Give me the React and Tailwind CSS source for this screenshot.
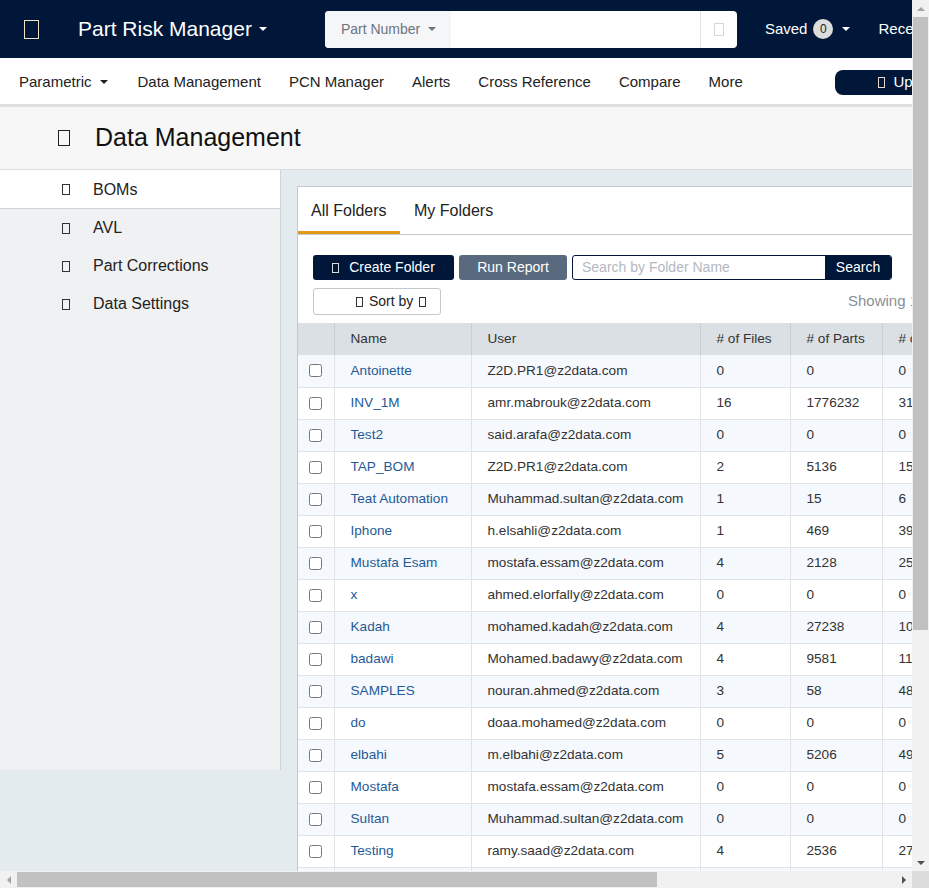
import { useState } from "react";

const Tofu = ({ className = "" }) => (
  <span className={`inline-block border ${className}`} />
);

const Caret = ({ className = "" }) => (
  <span
    className={`inline-block w-0 h-0 border-x-[4px] border-x-transparent border-t-[4px] ${className}`}
  />
);

const folders = [
  ["Antoinette", "Z2D.PR1@z2data.com", "0", "0", "0"],
  ["INV_1M", "amr.mabrouk@z2data.com", "16", "1776232", "31204"],
  ["Test2", "said.arafa@z2data.com", "0", "0", "0"],
  ["TAP_BOM", "Z2D.PR1@z2data.com", "2", "5136", "152"],
  ["Teat Automation", "Muhammad.sultan@z2data.com", "1", "15", "6"],
  ["Iphone", "h.elsahli@z2data.com", "1", "469", "392"],
  ["Mustafa Esam", "mostafa.essam@z2data.com", "4", "2128", "254"],
  ["x", "ahmed.elorfally@z2data.com", "0", "0", "0"],
  ["Kadah", "mohamed.kadah@z2data.com", "4", "27238", "1024"],
  ["badawi", "Mohamed.badawy@z2data.com", "4", "9581", "1180"],
  ["SAMPLES", "nouran.ahmed@z2data.com", "3", "58", "48"],
  ["do", "doaa.mohamed@z2data.com", "0", "0", "0"],
  ["elbahi", "m.elbahi@z2data.com", "5", "5206", "493"],
  ["Mostafa", "mostafa.essam@z2data.com", "0", "0", "0"],
  ["Sultan", "Muhammad.sultan@z2data.com", "0", "0", "0"],
  ["Testing", "ramy.saad@z2data.com", "4", "2536", "271"],
  ["Demo_BOM", "ahmed.hassan@z2data.com", "1", "312", "40"],
  ["QA", "sara.ali@z2data.com", "2", "880", "95"],
  ["Automotive", "omar.nabil@z2data.com", "3", "1420", "210"],
  ["Medical", "mona.adel@z2data.com", "0", "0", "0"],
  ["Industrial", "karim.fathy@z2data.com", "2", "764", "88"],
  ["Archive", "Z2D.PR1@z2data.com", "6", "10432", "902"],
  ["Review", "hany.samir@z2data.com", "1", "57", "12"],
  ["Misc", "nada.yasser@z2data.com", "0", "0", "0"],
];

const navItems = ["Data Management", "PCN Manager", "Alerts", "Cross Reference", "Compare", "More"];
const sideItems = ["BOMs", "AVL", "Part Corrections", "Data Settings"];

// browser-style scrollbars drawn over the page
const Scrollbars = () => (
  <>
    <div className="fixed top-0 right-0 w-[17px] h-[871px] bg-[#f1f1f1] flex flex-col items-center">
      <div className="h-[17px] flex items-center justify-center">
        <span className="w-0 h-0 border-x-[4px] border-x-transparent border-b-[4px] border-b-[#a3a3a3]" />
      </div>
      <div className="w-[15px] h-[613px] bg-[#c1c1c1]" />
      <div className="flex-1" />
      <div className="h-[17px] flex items-center justify-center">
        <span className="w-0 h-0 border-x-[4px] border-x-transparent border-t-[4px] border-t-[#505050]" />
      </div>
    </div>
    <div className="fixed bottom-0 left-0 w-[912px] h-[17px] bg-[#f1f1f1] flex items-center">
      <div className="w-[17px] flex items-center justify-center">
        <span className="w-0 h-0 border-y-[4px] border-y-transparent border-r-[4px] border-r-[#a3a3a3]" />
      </div>
      <div className="w-[640px] h-[15px] bg-[#c1c1c1]" />
      <div className="flex-1" />
      <div className="w-[17px] flex items-center justify-center">
        <span className="w-0 h-0 border-y-[4px] border-y-transparent border-l-[4px] border-l-[#505050]" />
      </div>
    </div>
    <div className="fixed bottom-0 right-0 w-[17px] h-[17px] bg-[#dcdcdc]" />
  </>
);

export default function App() {
  const [tab, setTab] = useState("all");

  return (
    <div className="w-[1250px] font-['Liberation_Sans',Arial,sans-serif] text-[#333] bg-[#e4ebee]">
      {/* top header */}
      <header className="h-[58px] bg-[#00173a] flex items-center text-white">
        <Tofu className="ml-[24px] w-[15px] h-[19px] border-[#efe3c2]" />
        <div className="ml-[39px] flex items-center gap-[7px] text-[21px]">
          Part Risk Manager
          <Caret className="border-t-white" />
        </div>
        <div className="ml-[58px] flex h-[37px] w-[412px] rounded-[4px] overflow-hidden bg-white">
          <div className="w-[126px] bg-[#f5f6f8] flex items-center pl-[16px] gap-[8px] text-[14px] text-[#6c757d]">
            Part Number
            <Caret className="border-t-[#6c757d]" />
          </div>
          <input className="flex-1 outline-none px-2 text-[14px]" />
          <div className="w-[37px] border-l border-[#dfe2e6] flex items-center justify-center">
            <Tofu className="w-[10px] h-[13px] border-[#d4d7db]" />
          </div>
        </div>
        <div className="ml-[28px] flex items-center text-[15px]">
          Saved
          <span className="ml-[6px] w-[20px] h-[20px] rounded-full bg-[#dcdcdc] text-[#222] text-[12px] flex items-center justify-center">
            0
          </span>
          <Caret className="ml-[9px] border-t-white" />
        </div>
        <div className="ml-[28px] flex items-center gap-[8px] text-[15px]">
          Recent
          <Caret className="border-t-white" />
        </div>
        <div className="ml-[32px] flex items-center gap-[8px] text-[15px]">
          Help
          <Caret className="border-t-white" />
        </div>
        <div className="ml-[32px] flex items-center gap-[8px] text-[15px]">
          Z2D.PR1
          <Caret className="border-t-white" />
        </div>
      </header>

      {/* main nav */}
      <nav className="h-[49px] pt-[2px] bg-white border-b-[3px] border-[#dedede] flex items-center text-[15px] text-[#222]">
        <div className="ml-[19px] flex items-center gap-[8px] pr-[16px]">
          Parametric
          <Caret className="border-t-[#222]" />
        </div>
        {navItems.map((item) => (
          <div key={item} className="px-[14px]">
            {item}
          </div>
        ))}
        <button className="ml-[78px] w-[150px] h-[25px] rounded-[8px] bg-[#00173a] text-white flex items-center justify-center gap-[8px] text-[15px]">
          <Tofu className="w-[7px] h-[11px] border-[#e7d9c8]" />
          Upload
        </button>
      </nav>

      {/* page title */}
      <div className="h-[63px] bg-[#f7f7f7] border-b border-[#dcdcdc] flex items-center">
        <Tofu className="ml-[58px] w-[12px] h-[16px] border-[#222]" />
        <h1 className="ml-[25px] text-[25px] text-[#111]">Data Management</h1>
      </div>

      <div className="flex items-start">
        {/* sidebar */}
        <aside className="w-[281px] h-[600px] bg-[#f0f1f3] border-r border-[#cfd3d7] shrink-0">
          {sideItems.map((item, i) => (
            <div
              key={item}
              className={`flex items-center text-[16px] text-[#222] ${
                i === 0 ? "bg-white border-b border-[#cfd3d7] h-[39px] pt-[1px]" : "h-[38px]"
              }`}
            >
              <Tofu className="ml-[62px] w-[8px] h-[11px] border-[#333]" />
              <span className="ml-[23px]">{item}</span>
            </div>
          ))}
        </aside>

        {/* content */}
        <main className="flex-1 p-[16px]">
          <div className="bg-white border border-[#c3c8cd]">
            <div className="flex h-[48px] border-b border-[#c3c8cd] text-[16px] text-[#222]">
              <button
                onClick={() => setTab("all")}
                className={`w-[102px] pl-[13px] pt-[3px] text-left border-b-[3px] ${
                  tab === "all" ? "border-[#e09a17]" : "border-transparent"
                }`}
              >
                All Folders
              </button>
              <button
                onClick={() => setTab("my")}
                className={`px-[14px] pt-[3px] border-b-[3px] ${
                  tab === "my" ? "border-[#e09a17]" : "border-transparent"
                }`}
              >
                My Folders
              </button>
            </div>

            <div className="pl-[15px] pt-[20px] flex items-center gap-[5px] text-[14px]">
              <button className="h-[25px] w-[141px] rounded-[3px] bg-[#00173a] text-white flex items-center justify-center gap-[10px]">
                <Tofu className="w-[7px] h-[10px] border-[#d8d8d8]" />
                Create Folder
              </button>
              <button className="h-[25px] w-[108px] rounded-[3px] bg-[#5a6a7e] text-white">
                Run Report
              </button>
              <div className="flex h-[25px] w-[320px] rounded-[3px] border border-[#00173a] overflow-hidden">
                <input
                  placeholder="Search by Folder Name"
                  className="flex-1 px-[9px] outline-none text-[14px] placeholder:text-[#b4b9bf]"
                />
                <button className="w-[66px] bg-[#00173a] text-white">Search</button>
              </div>
            </div>

            <div className="pl-[15px] pt-[8px] pb-[8px] flex items-center">
              <button className="h-[27px] w-[128px] pl-[42px] rounded-[3px] border border-[#c3c8cd] flex items-center gap-[6px] text-[14px] text-[#222]">
                <Tofu className="w-[7px] h-[10px] border-[#333]" />
                Sort by
                <Tofu className="w-[7px] h-[10px] border-[#333]" />
              </button>
              <span className="ml-[407px] text-[15px] text-[#8a9097]">Showing 1 to 24 of 24 folders</span>
            </div>

            <table className="w-full border-collapse text-[13.6px] table-fixed">
              <colgroup>
                <col className="w-[36px]" />
                <col className="w-[137px]" />
                <col className="w-[229px]" />
                <col className="w-[90px]" />
                <col className="w-[92px]" />
                <col className="w-[110px]" />
                <col className="w-[130px]" />
                <col />
              </colgroup>
              <thead>
                <tr className="h-[32px] bg-[#dbe0e5] text-left text-[#333]">
                  <th className="border-r border-[#c9cfd5]" />
                  {["Name", "User", "# of Files", "# of Parts", "# of Alerts", "Created Date", "Actions"].map((h) => (
                    <th key={h} className="font-normal pl-[16px] border-r border-[#c9cfd5]">
                      {h}
                    </th>
                  ))}
                </tr>
              </thead>
              <tbody>
                {folders.map((row, i) => (
                  <tr
                    key={row[0] + i}
                    className={`h-[32px] border-b border-[#e0e4e8] ${i % 2 === 0 ? "bg-[#f5f8fd]" : "bg-white"}`}
                  >
                    <td className="border-r border-[#e0e4e8] text-center">
                      <input type="checkbox" className="w-[13px] h-[13px] align-middle" />
                    </td>
                    <td className="pl-[16px] border-r border-[#e0e4e8] text-[#1f5b97] whitespace-nowrap">{row[0]}</td>
                    <td className="pl-[16px] border-r border-[#e0e4e8] whitespace-nowrap">{row[1]}</td>
                    <td className="pl-[16px] border-r border-[#e0e4e8]">{row[2]}</td>
                    <td className="pl-[16px] border-r border-[#e0e4e8]">{row[3]}</td>
                    <td className="pl-[16px] border-r border-[#e0e4e8]">{row[4]}</td>
                    <td className="pl-[16px] border-r border-[#e0e4e8]">2023-05-1{i % 10}</td>
                    <td className="pl-[16px] text-[#1f5b97]">Edit</td>
                  </tr>
                ))}
              </tbody>
            </table>
          </div>
        </main>
      </div>

      <Scrollbars />
    </div>
  );
}
